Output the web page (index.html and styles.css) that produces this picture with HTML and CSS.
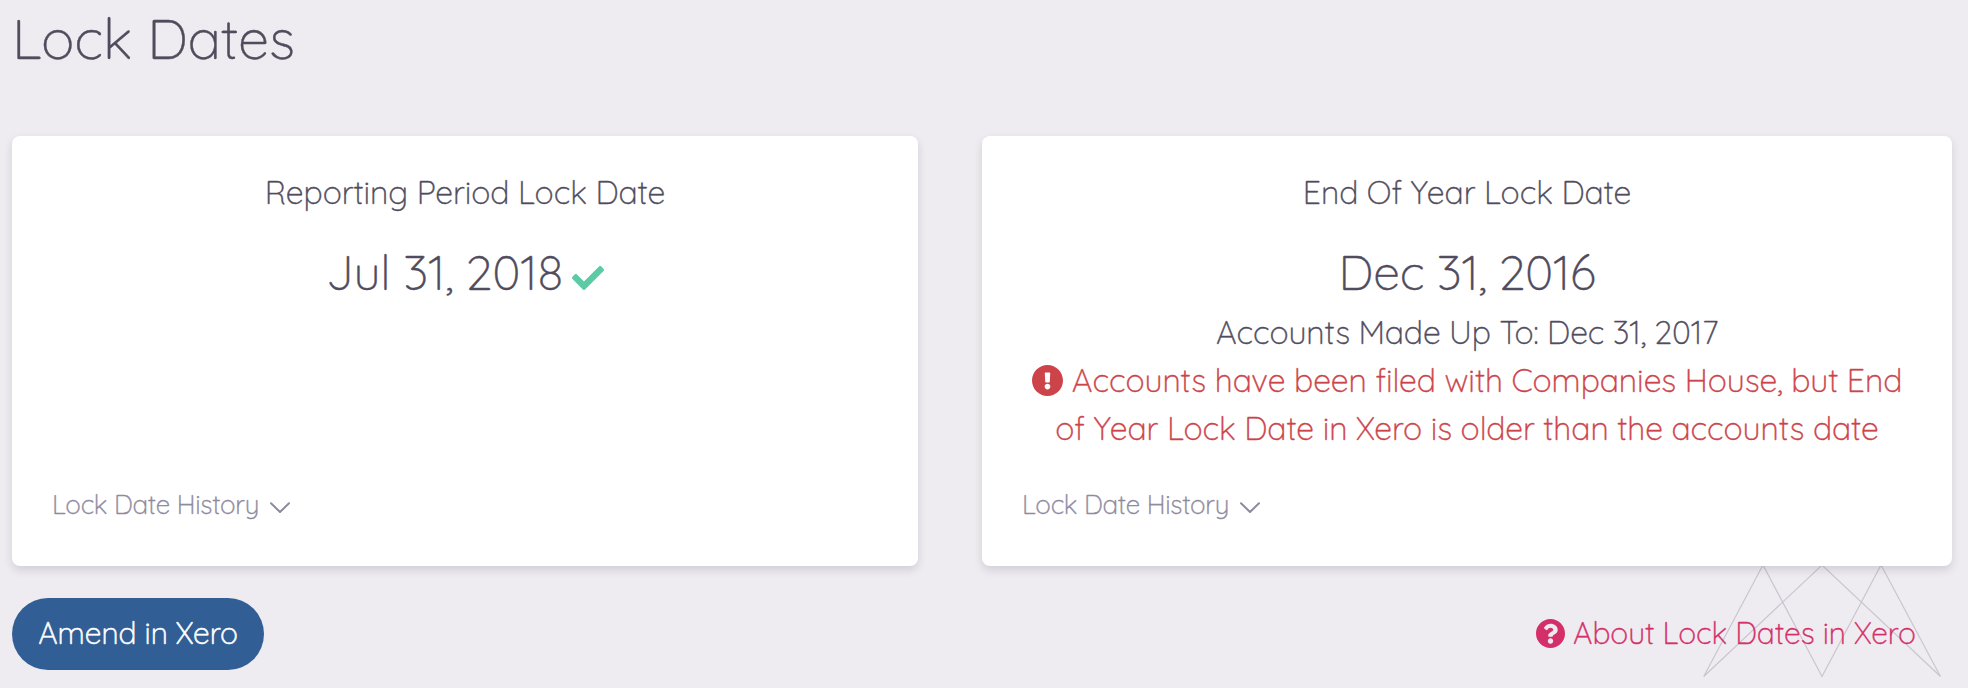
FILE: index.html
```html
<!DOCTYPE html>
<html lang="en">
<head>
<meta charset="utf-8">
<title>Lock Dates</title>
<link rel="stylesheet" href="styles.css">
</head>
<body>
<main class="page">
  <h1 class="page-title">Lock Dates</h1>
  <div class="cards">
    <section class="card">
      <h2 class="card-title">Reporting Period Lock Date</h2>
      <p class="date">Jul 31, 2018<svg class="check" viewBox="0 0 512 512"><path d="M173.898 439.404l-166.4-166.4c-9.997-9.997-9.997-26.206 0-36.204l36.203-36.204c9.997-9.998 26.207-9.998 36.204 0L192 312.69 432.095 72.596c9.997-9.997 26.207-9.997 36.204 0l36.203 36.204c9.997 9.997 9.997 26.206 0 36.204l-294.4 294.401c-9.998 9.997-26.207 9.997-36.204-.001z"/></svg></p>
      <a class="history">Lock Date History<svg class="chevron" viewBox="0 0 20 12"><path d="M1 1.2l9 8.8 9-8.8"/></svg></a>
    </section>
    <section class="card">
      <h2 class="card-title">End Of Year Lock Date</h2>
      <p class="date year-end">Dec 31, 2016</p>
      <p class="line made-up">Accounts Made Up To: Dec 31, 2017</p>
      <p class="line alert"><span class="first"><svg class="warn" viewBox="8 8 496 496"><path d="M504 256c0 136.997-111.043 248-248 248S8 392.997 8 256C8 119.083 119.043 8 256 8s248 111.083 248 248zm-248 50c-25.405 0-46 20.595-46 46s20.595 46 46 46 46-20.595 46-46-20.595-46-46-46zm-43.673-165.346l7.418 136c.347 6.364 5.609 11.346 11.982 11.346h48.546c6.373 0 11.635-4.982 11.982-11.346l7.418-136c.375-6.874-5.098-12.654-11.982-12.654h-63.383c-6.884 0-12.356 5.78-11.981 12.654z"/></svg>Accounts have been filed with Companies House, but End</span> <span class="second">of Year Lock Date in Xero is older than the accounts date</span></p>
      <a class="history">Lock Date History<svg class="chevron" viewBox="0 0 20 12"><path d="M1 1.2l9 8.8 9-8.8"/></svg></a>
    </section>
  </div>
  <footer class="actions">
    <a class="button">Amend in Xero</a>
    <a class="about"><svg class="help" viewBox="8 8 496 496"><path d="M504 256c0 136.997-111.043 248-248 248S8 392.997 8 256C8 119.083 119.043 8 256 8s248 111.083 248 248zM262.655 90c-54.497 0-89.255 22.957-116.549 63.758-3.536 5.286-2.353 12.415 2.715 16.258l34.699 26.31c5.205 3.947 12.621 3.008 16.665-2.122 17.864-22.658 30.113-35.797 57.303-35.797 20.429 0 45.698 13.148 45.698 32.958 0 14.976-12.363 22.667-32.534 33.976C247.128 238.528 216 254.941 216 296v4c0 6.627 5.373 12 12 12h56c6.627 0 12-5.373 12-12v-1.333c0-28.462 83.186-29.647 83.186-106.667 0-58.002-60.165-102-116.531-102zM256 338c-25.365 0-46 20.635-46 46 0 25.364 20.635 46 46 46s46-20.636 46-46c0-25.364-20.635-46-46-46z"/></svg>About Lock Dates in Xero</a>
    <svg class="crown" viewBox="0 0 240 114"><path d="M1.7 112.5L61 1l59 111.5L179 1l59.5 111.5L120 1z"/></svg>
  </footer>
</main>
</body>
</html>
```
FILE: styles.css
```css
* {
  box-sizing: border-box;
}

body {
  margin: 0;
  background: #eeecf1;
  color: #504c5d;
  font-family: Quicksand, Lato, sans-serif;
  font-weight: 300;
  -webkit-text-stroke: .4px currentColor;
}

svg {
  -webkit-text-stroke: 0;
}

h1, h2, p {
  margin: 0;
  font-weight: 300;
}

.page {
  height: 688px;
  padding: 2px 16px 0 12px;
  overflow: hidden;
}

.page-title {
  height: 134px;
  font-size: 56px;
  line-height: 73px;
  letter-spacing: -.17px;
}

.cards {
  display: grid;
  grid-template-columns: 906px 970px;
  gap: 64px;
  position: relative;
  z-index: 1;
}

.card {
  display: flex;
  flex-direction: column;
  height: 430px;
  padding: 32px 40px 41px;
  border-radius: 8px;
  background: #fff;
  box-shadow: 0 4px 8px rgba(50, 40, 60, .15);
  text-align: center;
  white-space: nowrap;
}

.card-title {
  margin-bottom: 20px;
  font-size: 32px;
  line-height: 48px;
  letter-spacing: -.06px;
}

.date {
  font-size: 48px;
  line-height: 72px;
  letter-spacing: -.17px;
}

.year-end {
  letter-spacing: -.29px;
}

.check {
  width: 32px;
  height: 32px;
  margin-left: 9px;
  vertical-align: -4px;
  fill: #5acba5;
}

.line {
  font-size: 32px;
  line-height: 48px;
}

.made-up {
  letter-spacing: -.12px;
}

.alert {
  color: #cc444a;
  letter-spacing: -.06px;
}

.first,
.second {
  display: block;
}

.warn {
  width: 31px;
  height: 31px;
  margin-right: 9px;
  vertical-align: -4px;
  fill: currentColor;
}

.history {
  display: flex;
  align-items: center;
  margin-top: auto;
  color: #8f8a9e;
  font-size: 26px;
  line-height: 40px;
  letter-spacing: -.23px;
}

.chevron {
  width: 20px;
  height: 12px;
  margin: 5px 0 0 11px;
  fill: none;
  stroke: currentColor;
  stroke-width: 2;
  stroke-linecap: round;
  stroke-linejoin: round;
}

.actions {
  display: flex;
  justify-content: space-between;
  position: relative;
  padding: 32px 36px 0 0;
  font-size: 30px;
  line-height: 70px;
  letter-spacing: -.04px;
  white-space: nowrap;
}

.button {
  width: 252px;
  height: 72px;
  border-radius: 36px;
  background: #315e95;
  color: #fff;
  text-align: center;
  -webkit-text-stroke-width: .6px;
}

.about {
  position: relative;
  z-index: 1;
  color: #d42f68;
}

.help {
  width: 29px;
  height: 29px;
  margin-right: 8px;
  vertical-align: -4px;
  fill: currentColor;
}

.crown {
  position: absolute;
  right: 10px;
  top: -2px;
  width: 240px;
  height: 114px;
  fill: none;
  stroke: #c9c6cd;
  stroke-width: 1.2;
}
```
